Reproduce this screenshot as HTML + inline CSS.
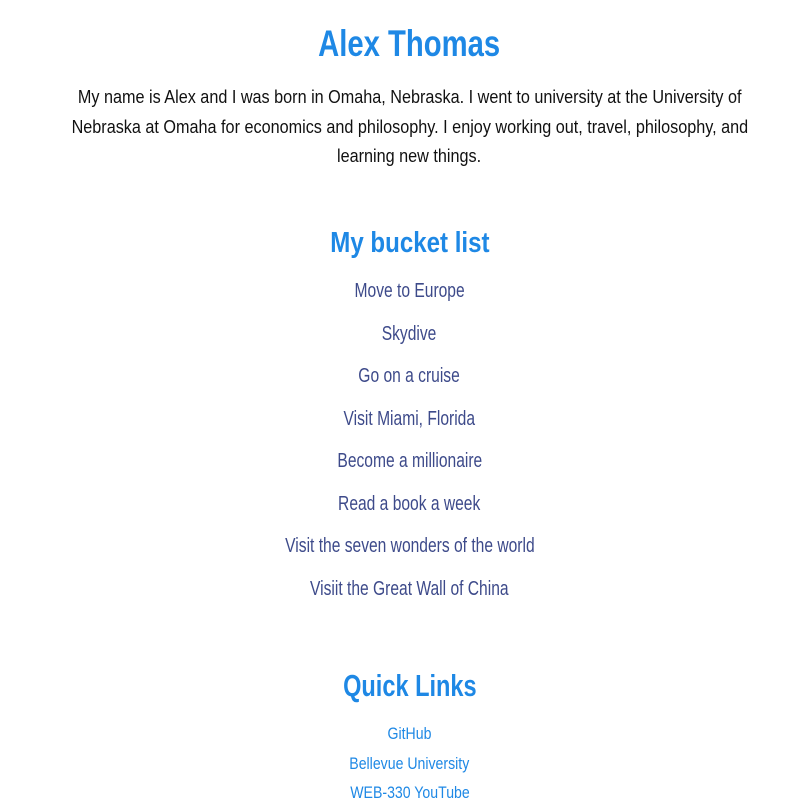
<!DOCTYPE html>
<html><head><meta charset="utf-8"><style>
body{margin:0;width:811px;height:800px;overflow:hidden;background:#fff;font-family:"Liberation Sans",sans-serif;position:relative}
.l{position:absolute;left:4px;width:811px;text-align:center;white-space:nowrap}
.l span{display:inline-block}
.h{color:#1e88e5;font-weight:bold}
.p{color:#111;font-size:18px}
.p span{transform:scaleX(.9)}
.li{color:#3d4a8a;font-size:20px}
.li span{transform:scaleX(.78)}
.a{color:#1e88e5;font-size:17px}
.a span{transform:scaleX(.83)}
</style></head><body>
<div class="l h" style="top:23px;font-size:37px"><span style="transform:scaleX(.79)">Alex Thomas</span></div>
<div class="l p" style="top:87px"><span>My name is Alex and I was born in Omaha, Nebraska. I went to university at the University of</span></div>
<div class="l p" style="top:117px"><span>Nebraska at Omaha for economics and philosophy. I enjoy working out, travel, philosophy, and</span></div>
<div class="l p" style="top:146px"><span>learning new things.</span></div>
<div class="l h" style="top:227px;font-size:29px"><span style="transform:scaleX(.83)">My bucket list</span></div>
<div class="l li" style="top:280px"><span>Move to Europe</span></div>
<div class="l li" style="top:323px"><span>Skydive</span></div>
<div class="l li" style="top:365px"><span>Go on a cruise</span></div>
<div class="l li" style="top:408px"><span>Visit Miami, Florida</span></div>
<div class="l li" style="top:450px"><span>Become a millionaire</span></div>
<div class="l li" style="top:493px"><span>Read a book a week</span></div>
<div class="l li" style="top:535px"><span>Visit the seven wonders of the world</span></div>
<div class="l li" style="top:578px"><span>Visiit the Great Wall of China</span></div>
<div class="l h" style="top:668px;font-size:31px"><span style="transform:scaleX(.76)">Quick Links</span></div>
<div class="l a" style="top:724px"><span>GitHub</span></div>
<div class="l a" style="top:754px"><span>Bellevue University</span></div>
<div class="l a" style="top:783px"><span>WEB-330 YouTube</span></div>
</body></html>
